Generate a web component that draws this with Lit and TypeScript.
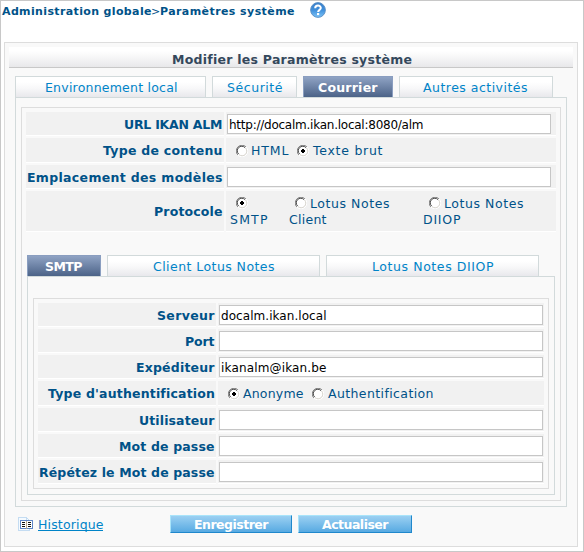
import { LitElement, html, css, svg, nothing } from "lit";
import { customElement, property } from "lit/decorators.js";
import { classMap } from "lit/directives/class-map.js";

/** A single line of text, tracked so that it fills a given width. */
@customElement("fit-text")
class FitText extends LitElement {
  @property() text = "";
  @property({ type: Number }) width = 0;
  static styles = css`
    :host { display: inline-block; white-space: pre; line-height: 14px; height: 14px; flex: none; vertical-align: top; }
    .t { display: inline-block; line-height: 14px; }
  `;
  render() { return html`<span class="t">${this.text}</span>`; }
  updated() {
    const s = this.renderRoot.querySelector(".t") as HTMLElement;
    s.style.letterSpacing = "0px";
    const natural = s.getBoundingClientRect().width;
    s.style.letterSpacing = (this.width + 0.5 - natural) / Math.max(1, this.text.length - 1) + "px";
    this.style.width = this.width + "px";
  }
}

const t = (text: string, width: number) => html`<fit-text .text=${text} .width=${width}></fit-text>`;

@customElement("radio-dot")
class RadioDot extends LitElement {
  @property({ type: Boolean }) checked = false;
  static styles = css`
    :host { display: block; width: 12px; height: 12px; flex: none; }
    svg { display: block; }
  `;
  render() {
    return html`<svg width="12" height="12" viewBox="0 0 12 12" fill="none">
      <circle cx="6" cy="6" r="5" fill="#fff"></circle>
      <path d="M1.9 10.1A5.6 5.6 0 0 1 10.1 1.9" stroke="#858585"></path>
      <path d="M10.1 1.9A5.6 5.6 0 0 1 1.9 10.1" stroke="#fff"></path>
      <path d="M2.6 9A4.5 4.5 0 0 1 9 2.6" stroke="#454545"></path>
      <path d="M9.4 2.9A4.5 4.5 0 0 1 2.9 9.4" stroke="#d8d5ce"></path>
      ${this.checked ? svg`<path d="M5 4h2v1h1v2h-1v1h-2v-1h-1v-2h1z" fill="#000"></path>` : nothing}
    </svg>`;
  }
}

type Row = { label: string; w: number; kind: "input" | "choice" | "protocol"; value?: string; vw?: number; options?: Option[] };
type Option = { text: string; w: number; on?: boolean; second?: string; sw?: number };

const mailRows: Row[] = [
  { label: "URL IKAN ALM", w: 98, kind: "input", value: "http://docalm.ikan.local:8080/alm", vw: 194 },
  { label: "Type de contenu", w: 119, kind: "choice", options: [{ text: "HTML", w: 37 }, { text: "Texte brut", w: 69, on: true }] },
  { label: "Emplacement des modèles", w: 195, kind: "input" },
  { label: "Protocole", w: 68, kind: "protocol", options: [
    { text: "", w: 0, on: true, second: "SMTP", sw: 37 },
    { text: "Lotus Notes", w: 79, second: "Client", sw: 37 },
    { text: "Lotus Notes", w: 79, second: "DIIOP", sw: 37 },
  ] },
];

const smtpRows: Row[] = [
  { label: "Serveur", w: 57, kind: "input", value: "docalm.ikan.local", vw: 105 },
  { label: "Port", w: 29, kind: "input" },
  { label: "Expéditeur", w: 78, kind: "input", value: "ikanalm@ikan.be", vw: 105 },
  { label: "Type d'authentification", w: 166, kind: "choice", options: [{ text: "Anonyme", w: 60, on: true }, { text: "Authentification", w: 105 }] },
  { label: "Utilisateur", w: 75, kind: "input" },
  { label: "Mot de passe", w: 95, kind: "input" },
  { label: "Répétez le Mot de passe", w: 175, kind: "input" },
];

@customElement("app-root")
class AppRoot extends LitElement {
  static styles = css`
    * { box-sizing: border-box; }
    :host {
      display: block; width: 584px; height: 552px; box-sizing: border-box; overflow: hidden;
      border: 1px solid #c8c8c8; background: #fff; padding: 1px 5px 4px 3px;
      font: 12.5px/14px "DejaVu Sans", Verdana, sans-serif; color: #005288;
    }
    .crumbs { display: flex; height: 40px; font-size: 11px; font-weight: bold; padding-top: 3px; margin-left: -2px; }
    .crumbs .sep { font-weight: normal; margin: 0 1px 0 0; }
    .crumbs svg { margin: -3px 0 0 16px; }
    .panel { width: 574px; height: 505px; border: 1px solid #ddd; background: #f9f9f9; padding: 4px; }
    .title {
      height: 21px; border-bottom: 1px solid #c8c8c8; background: linear-gradient(#fff 20%, #f4f4f5 60%, #e8e8ea);
      display: flex; justify-content: center; padding: 6px 0 0 1px; color: #34485c; font-weight: bold;
    }
    .tabs { display: flex; gap: 6px; }
    .main-tabs { margin: 8px 0 0 6px; }
    .tab {
      height: 21px; border: 1px solid #d2dadb; border-bottom: 0; flex: none; padding-top: 4px;
      background: linear-gradient(#fff 25%, #f8f8f9 55%, #e8e8ec); color: #0084c8;
    }
    .tab.on { background: linear-gradient(#8fa3c4, #4c6388); border-color: #8a9ec0; color: #fff; font-weight: bold; }
    .box { border: 1px solid #d2dadb; }
    .main-box { width: 552px; height: 410px; margin-left: 6px; padding: 9px 5px 5px; }
    .inner { border: 1px solid #ddd; padding: 4px; }
    .main-inner { height: 394px; }
    .row { display: flex; gap: 2px; height: 24px; margin-bottom: 2px; }
    .row.choice { height: 25px; }
    .row.protocol { height: 41px; }
    .cell { background: #f1f1f1; border-bottom: 1px solid #fff; }
    .label { flex: none; display: flex; justify-content: flex-end; padding: 6px 2px 0 0; font-weight: bold; }
    .main-inner > .row > .label { width: 198px; }
    .sub-inner > .row > .label { width: 178px; }
    .protocol .label { padding-top: 14px; }
    .value { flex: 1; display: flex; }
    .field {
      width: 324px; height: 20px; margin: 2px 0 0 1px; border: 1px solid #c6c6c6; background: #fff;
      padding: 3px 0 0 1px; color: #000; font-size: 12px;
    }
    .opt { display: flex; padding: 6px 0 0 10px; }
    .opt fit-text { margin-left: 3px; }
    .opt radio-dot { margin-top: 1px; }
    .opt + .opt { padding-left: 9px; }
    .opt + .opt fit-text { margin-left: 4px; }
    .proto { padding: 6px 0 0 4px; flex: none; }
    .proto:nth-child(1) { width: 59px; }
    .proto:nth-child(2) { width: 134px; }
    .line { display: flex; height: 16px; padding-left: 6px; }
    .line fit-text { margin-left: 3px; }
    .sub-tabs { margin: 23px 0 0 1px; }
    .sub-box { width: 528px; height: 219px; margin-left: 1px; padding: 21px 5px 5px; }
    .sub-inner { height: 191px; }
    .foot { display: flex; padding: 8px 0 0 9px; }
    .foot .book { margin-top: 1px; flex: none; }
    .link {
      color: #0084c8; margin: 3px 67px 0 4px; height: 13px; width: 65px;
      border-bottom: 1px solid #0084c8;
    }
    .btn {
      height: 18px; border: 1px solid; border-color: #a9e4fa #2088cc #2088cc #a9e4fa; padding-top: 2px;
      background: linear-gradient(#9bd0f2, #58aae2); color: #fff; font-weight: bold; margin-right: 6px;
    }
    .save { width: 122px; padding-left: 23px; }
    .refresh { width: 114px; padding-left: 23px; }
    .t-env { width: 191px; padding-left: 29px; }
    .t-sec { width: 85px; padding-left: 14px; }
    .t-mail { width: 90px; padding-left: 14px; }
    .t-other { width: 154px; padding-left: 23px; }
    .t-smtp { width: 74px; padding-left: 17px; }
    .t-client { width: 213px; padding-left: 45px; }
    .t-diiop { width: 213px; padding-left: 45px; }
  `;

  tab(cls: string, text: string, w: number, on = false) {
    return html`<div class=${classMap({ tab: true, on, [cls]: true })}>${t(text, w)}</div>`;
  }

  row(r: Row) {
    return html`<div class="row ${r.kind}">
      <div class="cell label">${t(r.label, r.w)}</div>
      <div class="cell value">
        ${r.kind === "input" ? html`<div class="field">${r.value ? t(r.value, r.vw!) : nothing}</div>` : nothing}
        ${r.kind === "choice" ? r.options!.map(o => html`<div class="opt"><radio-dot .checked=${!!o.on}></radio-dot>${t(o.text, o.w)}</div>`) : nothing}
        ${r.kind === "protocol" ? r.options!.map(o => html`<div class="proto">
          <div class="line"><radio-dot .checked=${!!o.on}></radio-dot>${o.text ? t(o.text, o.w) : nothing}</div>
          ${t(o.second!, o.sw!)}
        </div>`) : nothing}
      </div>
    </div>`;
  }

  render() {
    return html`
      <div class="crumbs">
        ${t("Administration globale", 149)}
        <div class="sep">${t(">", 8)}</div>
        ${t("Paramètres système", 134)}
        <svg width="16" height="16" viewBox="0 0 16 16">
          <defs><linearGradient id="g" x2="0" y2="1"><stop stop-color="#3a80ca"></stop><stop offset=".5" stop-color="#3f8fdb"></stop><stop offset="1" stop-color="#7cc4f8"></stop></linearGradient></defs>
          <circle cx="8" cy="8" r="7.4" fill="url(#g)" stroke="#5b8fc4" stroke-width=".9"></circle>
          <path d="M5.2 6.2C5.2 2.7 10.9 2.8 10.8 6C10.7 7.9 8.1 7.8 8.1 10" fill="none" stroke="#fff" stroke-width="2"></path>
          <rect x="7" y="11" width="2.2" height="2.1" fill="#fff"></rect>
        </svg>
      </div>
      <div class="panel">
        <div class="title">${t("Modifier les Paramètres système", 239)}</div>
        <div class="tabs main-tabs">
          ${this.tab("t-env", "Environnement local", 132)}
          ${this.tab("t-sec", "Sécurité", 55)}
          ${this.tab("t-mail", "Courrier", 59, true)}
          ${this.tab("t-other", "Autres activités", 104)}
        </div>
        <div class="box main-box">
          <div class="inner main-inner">
            ${mailRows.map(r => this.row(r))}
            <div class="tabs sub-tabs">
              ${this.tab("t-smtp", "SMTP", 37, true)}
              ${this.tab("t-client", "Client Lotus Notes", 121)}
              ${this.tab("t-diiop", "Lotus Notes DIIOP", 121)}
            </div>
            <div class="box sub-box">
              <div class="inner sub-inner">${smtpRows.map(r => this.row(r))}</div>
            </div>
          </div>
        </div>
        <div class="foot">
          <svg class="book" width="16" height="16" viewBox="0 0 16 16" shape-rendering="crispEdges">
            <path d="M.5 1.5h8l3 3v10h-11z" fill="#f4faff" stroke="#c4dcf2"></path>
            <path d="M8.5 1.5v3h3" fill="none" stroke="#c4dcf2"></path>
            <rect x="2.5" y="4.500" width="12" height="8" fill="#fff" stroke="#5f86c8"></rect>
            <path d="M4 6.500h3M4 8.500h3M4 10.500h3M10 6.500h3M10 8.500h3M10 10.500h3" stroke="#111"></path>
            <path d="M8.500 5v8" stroke="#b8a890"></path>
          </svg>
          <div class="link">${t("Historique", 65)}</div>
          <div class="btn save">${t("Enregistrer", 74)}</div>
          <div class="btn refresh">${t("Actualiser", 66)}</div>
        </div>
      </div>`;
  }
}
